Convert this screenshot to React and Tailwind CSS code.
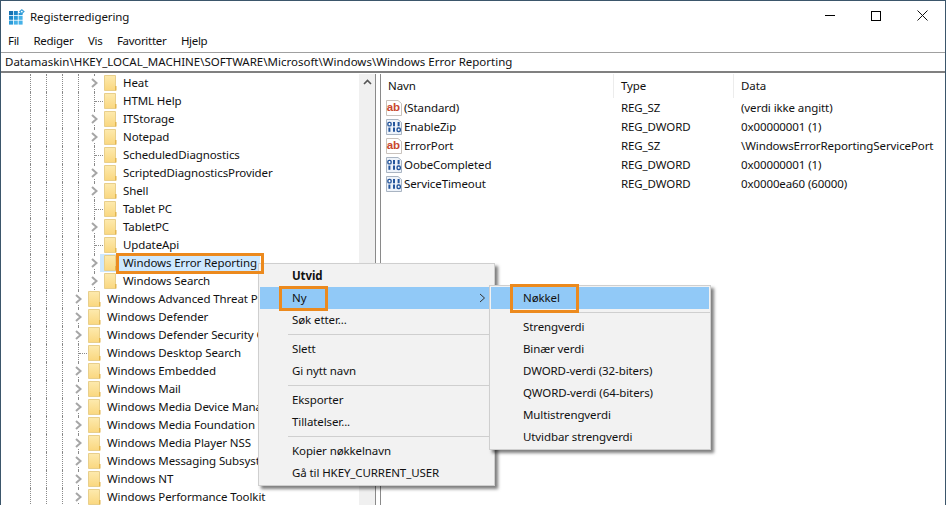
import React from 'react';

const TREE = [
  ['Heat', 2, true],
  ['HTML Help', 2, false],
  ['ITStorage', 2, true],
  ['Notepad', 2, true],
  ['ScheduledDiagnostics', 2, false],
  ['ScriptedDiagnosticsProvider', 2, true],
  ['Shell', 2, true],
  ['Tablet PC', 2, false],
  ['TabletPC', 2, true],
  ['UpdateApi', 2, false],
  ['Windows Error Reporting', 2, true, true],
  ['Windows Search', 2, true],
  ['Windows Advanced Threat Protection', 1, true],
  ['Windows Defender', 1, true],
  ['Windows Defender Security Center', 1, true],
  ['Windows Desktop Search', 1, false],
  ['Windows Embedded', 1, true],
  ['Windows Mail', 1, true],
  ['Windows Media Device Manager', 1, true],
  ['Windows Media Foundation', 1, true],
  ['Windows Media Player NSS', 1, true],
  ['Windows Messaging Subsystem', 1, true],
  ['Windows NT', 1, true],
  ['Windows Performance Toolkit', 1, true],
];

const VALUES = [
  ['(Standard)', 'REG_SZ', '(verdi ikke angitt)', 'sz'],
  ['EnableZip', 'REG_DWORD', '0x00000001 (1)', 'bin'],
  ['ErrorPort', 'REG_SZ', '\\WindowsErrorReportingServicePort', 'sz'],
  ['OobeCompleted', 'REG_DWORD', '0x00000001 (1)', 'bin'],
  ['ServiceTimeout', 'REG_DWORD', '0x0000ea60 (60000)', 'bin'],
];

function AppIcon() {
  return (
    <svg width="16" height="16" viewBox="0 0 16 16" className="shrink-0">
      <g fill="#2a9ad8">
        <rect x="0" y="2" width="4" height="4" fill="#1570b0" />
        <rect x="4.8" y="2" width="4" height="4" fill="#1f86c8" />
        <rect x="9.6" y="4" width="4" height="2" />
        <rect x="0" y="6.8" width="4" height="4" fill="#1f86c8" />
        <rect x="4.8" y="6.8" width="4" height="4" />
        <rect x="9.6" y="6.8" width="4" height="4" fill="#46b2e8" />
        <rect x="0" y="11.6" width="4" height="4" />
        <rect x="4.8" y="11.6" width="4" height="4" fill="#46b2e8" />
        <rect x="9.6" y="11.6" width="4" height="4" fill="#46b2e8" />
      </g>
      <path d="M12.8 0 L15.8 2.6 L12.8 5.2 L9.9 2.6 Z" fill="#3aa0d8" />
      <circle cx="12.8" cy="2.6" r="0.9" fill="#fff" />
    </svg>
  );
}

function Folder() {
  return (
    <svg width="13" height="16" viewBox="0 0 13 16" className="shrink-0">
      <defs>
        <linearGradient id="fold" x1="0" y1="0" x2="0" y2="1">
          <stop offset="0" stopColor="#fdeaae" />
          <stop offset="1" stopColor="#fad77f" />
        </linearGradient>
      </defs>
      <path d="M0.5 0.5 H11.5 V15.5 H0.5 Z" fill="url(#fold)" stroke="#e8cf8c" />
      <path d="M11 11 V15.5 H12.5 V11 Z" fill="#e3b64e" />
    </svg>
  );
}

function Chevron({ color = '#a6a6a6', sw = 2 }) {
  return (
    <svg width="7" height="10" viewBox="0 0 7 10">
      <path d="M1 1 L5.5 5 L1 9" fill="none" stroke={color} strokeWidth={sw} />
    </svg>
  );
}

function SzIcon() {
  return (
    <svg width="16" height="16" viewBox="0 0 16 16" className="shrink-0">
      <path d="M0.5 0.5 H12 L15.5 3.5 V15.5 H0.5 Z" fill="#fff" stroke="#c9c2bd" />
      <text x="0.8" y="11" fontSize="11.5" fontWeight="700" fill="#c8472f" fontFamily="'Liberation Sans', sans-serif">ab</text>
    </svg>
  );
}

function BinIcon() {
  const bits = [
    [0, 1, 1],
    [1, 1, 0],
  ];
  return (
    <svg width="16" height="16" viewBox="0 0 16 16" className="shrink-0">
      <path d="M0.5 0.5 H12 L15.5 3.5 V15.5 H0.5 Z" fill="#eef3fa" stroke="#a9b4c2" />
      {bits.map((row, r) =>
        row.map((b, c) =>
          b ? (
            <path key={`${r}${c}`} d={`M${3.4 + c * 4.6} ${3 + r * 5.6} v4.2`} stroke="#24559c" strokeWidth="2" />
          ) : (
            <rect key={`${r}${c}`} x={1.9 + c * 4.6} y={3.4 + r * 5.6} width="3.2" height="3.5" rx="1.2" fill="#fff" stroke="#24559c" strokeWidth="1.4" />
          ),
        ),
      )}
    </svg>
  );
}

function TreeRow({ name, depth, expandable, selected }) {
  const guides = depth === 2 ? [0, 1, 2, 3] : [0, 1, 2];
  return (
    <div className="flex h-[18px] shrink-0 pl-[29px] whitespace-nowrap">
      {guides.map((g) => (
        <div key={g} className="w-4 shrink-0 border-l border-dotted border-[#8a8a8a]" />
      ))}
      <div className="relative w-[6px] shrink-0 border-l border-dotted border-[#8a8a8a]">
        {expandable ? (
          <div className="absolute left-[-5px] top-[3px] flex h-3 w-[9px] items-center justify-center bg-white">
            <Chevron />
          </div>
        ) : (
          <div className="absolute left-0 top-[9px] w-2 border-t border-dotted border-[#8a8a8a]" />
        )}
      </div>
      <div className={`flex h-[18px] items-center pl-1 ${selected ? 'bg-[#cde8ff]' : ''}`}>
        <Folder />
        <span className="pl-[6px] pr-[3px] leading-[18px]">{name}</span>
      </div>
    </div>
  );
}

function MenuItem({ children, active, bold, arrow }) {
  return (
    <div
      className={`mx-px flex h-[22px] items-center justify-between pl-8 pr-[7px] whitespace-nowrap ${active ? 'bg-[#91c9f7]' : ''} ${bold ? 'font-bold' : ''}`}
    >
      <span>{children}</span>
      {arrow && <Chevron color="#333333" sw={1} />}
    </div>
  );
}

function Sep() {
  return (
    <div className="flex h-[7px] items-center pl-[29px]">
      <div className="h-px w-full bg-[#cfcfcf]" />
    </div>
  );
}

export default function App() {
  return (
    <div className="relative flex h-[505px] w-[946px] flex-col overflow-hidden border-x border-t border-[#3b566b] bg-white font-['Noto_Sans',sans-serif] text-[11.5px] text-[#111] tracking-[-0.1px]">
      {/* title bar */}
      <div className="flex h-[29px] shrink-0 items-center justify-between">
        <div className="flex items-center gap-[5px] pl-[8px] pt-[2px]">
          <AppIcon />
          <span>Registerredigering</span>
        </div>
        <div className="flex h-full">
          <div className="flex w-[46px] items-center justify-center">
            <div className="h-px w-[10px] bg-black" />
          </div>
          <div className="flex w-[46px] items-center justify-center">
            <div className="h-[10px] w-[10px] border border-black" />
          </div>
          <div className="flex w-[46px] items-center justify-center">
            <svg width="11" height="11" viewBox="0 0 11 11">
              <path d="M0.5 0.5 L10.5 10.5 M10.5 0.5 L0.5 10.5" stroke="#111" strokeWidth="1" />
            </svg>
          </div>
        </div>
      </div>

      {/* menu bar */}
      <div className="flex h-[22px] shrink-0 items-center gap-[14.5px] pl-[7px] tracking-[-0.3px]">
        <span>Fil</span>
        <span>Rediger</span>
        <span>Vis</span>
        <span>Favoritter</span>
        <span>Hjelp</span>
      </div>

      {/* address bar */}
      <div className="flex h-[21px] shrink-0 items-center border-t border-b-2 border-t-[#a0a0a0] border-b-[#808080] pl-[4px] tracking-normal">
        <span className="whitespace-nowrap">Datamaskin\HKEY_LOCAL_MACHINE\SOFTWARE\Microsoft\Windows\Windows Error Reporting</span>
      </div>

      {/* panes */}
      <div className="flex min-h-0 flex-1 pt-px">
        <div className="flex h-full w-[375px] shrink-0 border-r border-[#8a8a8a]">
          <div className="flex min-w-0 flex-1 flex-col overflow-hidden">
            {TREE.map(([name, depth, expandable, selected]) => (
              <TreeRow key={name} name={name} depth={depth} expandable={expandable} selected={selected} />
            ))}
          </div>
          <div className="flex w-4 shrink-0 justify-center bg-[#f0f0f0] pt-[5px]">
            <svg width="9" height="6" viewBox="0 0 9 6">
              <path d="M1 5 L4.5 1.5 L8 5" fill="none" stroke="#555" strokeWidth="1.6" />
            </svg>
          </div>
        </div>
        <div className="w-[4px] shrink-0" />
        <div className="min-w-0 flex-1 border-l border-[#8a8a8a]">
          <div className="flex h-[24px] items-center">
            <div className="h-full w-[233px] border-r border-[#ececec] pl-[7px] leading-[24px]">Navn</div>
            <div className="h-full w-[120px] border-r border-[#ececec] pl-[7px] leading-[24px]">Type</div>
            <div className="h-full pl-[7px] leading-[24px]">Data</div>
          </div>
          {VALUES.map(([name, type, data, kind]) => (
            <div key={name} className="flex h-[19px] items-center whitespace-nowrap">
              <div className="flex w-[233px] items-center gap-[2px] pl-[5px]">
                {kind === 'sz' ? <SzIcon /> : <BinIcon />}
                <span>{name}</span>
              </div>
              <div className="w-[120px] pl-[7px]">{type}</div>
              <div className="pl-[7px]">{data}</div>
            </div>
          ))}
        </div>
      </div>

      {/* context menu */}
      <div className="absolute left-[257px] top-[262px] z-10 w-[237px] border border-[#cfcfcf] bg-[#f2f2f2] py-px shadow-[3px_3px_3px_rgba(0,0,0,0.5)]">
        <MenuItem bold>Utvid</MenuItem>
        <MenuItem active arrow>Ny</MenuItem>
        <MenuItem>Søk etter...</MenuItem>
        <Sep />
        <MenuItem>Slett</MenuItem>
        <MenuItem>Gi nytt navn</MenuItem>
        <Sep />
        <MenuItem>Eksporter</MenuItem>
        <MenuItem>Tillatelser...</MenuItem>
        <Sep />
        <MenuItem>Kopier nøkkelnavn</MenuItem>
        <MenuItem>Gå til HKEY_CURRENT_USER</MenuItem>
      </div>

      {/* submenu */}
      <div className="absolute left-[488px] top-[284px] z-20 w-[222px] border border-[#cfcfcf] bg-[#f2f2f2] py-px shadow-[3px_3px_3px_rgba(0,0,0,0.5)]">
        <MenuItem active>Nøkkel</MenuItem>
        <Sep />
        <MenuItem>Strengverdi</MenuItem>
        <MenuItem>Binær verdi</MenuItem>
        <MenuItem>DWORD-verdi (32-biters)</MenuItem>
        <MenuItem>QWORD-verdi (64-biters)</MenuItem>
        <MenuItem>Multistrengverdi</MenuItem>
        <MenuItem>Utvidbar strengverdi</MenuItem>
      </div>

      {/* orange callouts */}
      <div className="absolute left-[115px] top-[252px] z-30 h-[21px] w-[148px] border-[3px] border-[#ec8a1e]" />
      <div className="absolute left-[278px] top-[285px] z-30 h-[25px] w-[49px] border-[3px] border-[#ec8a1e]" />
      <div className="absolute left-[509px] top-[283px] z-30 h-[29px] w-[69px] border-[3px] border-[#ec8a1e]" />
    </div>
  );
}
